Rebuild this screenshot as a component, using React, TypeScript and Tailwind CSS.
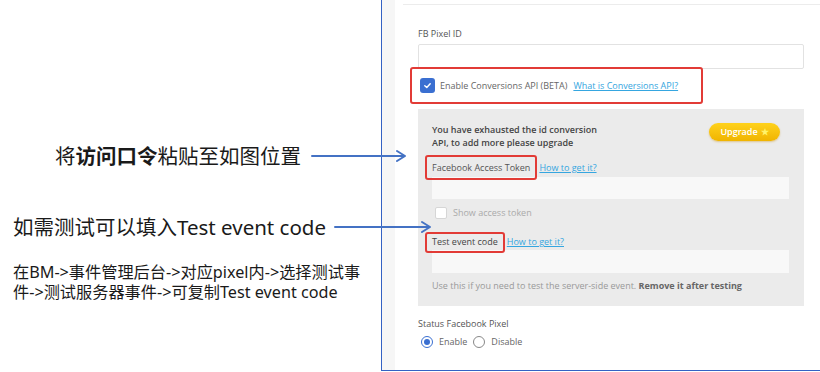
import React from "react";

const cjk = { fontFamily: '"Noto Sans", "Noto Sans CJK SC", sans-serif' };
const ui = { fontFamily: '"Open Sans", "Noto Sans", sans-serif' };

function Arrows() {
  return (
    <svg className="absolute left-0 top-0 pointer-events-none" width="820" height="372" viewBox="0 0 820 372" fill="none">
      <g stroke="#4472c4" strokeWidth="2" strokeLinecap="round" strokeLinejoin="round">
        <line x1="312" y1="156" x2="404" y2="156" />
        <path d="M397 151 L405 156 L397 161" />
        <line x1="335" y1="227" x2="429" y2="227" />
        <path d="M422 222 L430 227 L422 232" />
      </g>
    </svg>
  );
}

function Check({ on }: { on?: boolean }) {
  return on ? (
    <span className="flex h-[15px] w-[15px] items-center justify-center rounded-[3px] bg-[#3a6fd1]">
      <svg width="9" height="9" viewBox="0 0 10 10" fill="none" stroke="white" strokeWidth="1.6" strokeLinecap="round" strokeLinejoin="round">
        <path d="M2 5.2 L4.2 7.2 L8 3" />
      </svg>
    </span>
  ) : (
    <span className="h-[12px] w-[12px] rounded-[2px] border border-[#d6d6d6] bg-white" />
  );
}

export default function App() {
  return (
    <div className="relative flex h-[372px] w-[820px] overflow-hidden bg-white">
      {/* annotations */}
      <div className="w-[381px] shrink-0 text-[#1a1a1a]" style={cjk}>
        <div className="pl-[55px] pt-[142px] text-[20.5px] leading-[28px]">
          将<b className="font-bold">访问口令</b>粘贴至如图位置
        </div>
        <div className="pl-[13px] pt-[43px] text-[20.5px] leading-[28px]">如需测试可以填入Test event code</div>
        <div className="flex flex-col pl-[13px] pt-[21px] text-[16.2px] leading-[20px]">
          <div className="h-[20px] whitespace-nowrap">在BM-&gt;事件管理后台-&gt;对应pixel内-&gt;选择测试事</div>
          <div className="h-[20px] whitespace-nowrap">件-&gt;测试服务器事件-&gt;可复制Test event code</div>
        </div>
      </div>

      {/* screenshot panel */}
      <div className="flex h-[371px] flex-1 border-b border-l border-[#3462c4]">
        <div className="w-[13px] shrink-0 bg-[#f6f6f6]" />
        <div className="flex-1 text-[9px] text-[#555]" style={ui}>
          <div className="ml-2 h-[5px] border-b border-[#ececec]" />
          <div className="pl-[23px] pr-4">
            <div className="pt-[23px] leading-[12px]">FB Pixel ID</div>
            <div className="mt-[4px] h-[25px] rounded-[2px] border border-[#e2e2e2] bg-white" />
            <div className="-ml-2 mt-[-2px] flex h-[37px] w-[293px] items-center gap-[5px] rounded-[3px] border-2 border-[#e23b36] pl-[8px]">
              <Check on />
              <span className="text-[#666]">Enable Conversions API (BETA)</span>
              <span className="ml-[1px] text-[#35a6e0] underline">What is Conversions API?</span>
            </div>
            <div className="mt-[5px] h-[197px] bg-[#ebebeb] px-[14px] pt-[14px]">
              <div className="flex items-start justify-between pr-[10px]">
                <div className="font-semibold leading-[13px] text-[#444]">
                  You have exhausted the id conversion
                  <br />
                  API, to add more please upgrade
                </div>
                <div className="flex h-[18px] w-[71px] items-center justify-center gap-[3px] rounded-full bg-gradient-to-b from-[#ffd21a] to-[#f0b400] font-semibold text-white shadow-[0_1px_2px_rgba(200,140,0,0.4)]">
                  Upgrade <span className="text-[#fff36a]">★</span>
                </div>
              </div>
              <div className="mt-[6px] flex items-center">
                <span className="-ml-[7px] flex h-[25px] items-center rounded-[3px] border-2 border-[#e23b36] px-[5px] text-[#555]">
                  Facebook Access Token
                </span>
                <span className="ml-[2px] text-[#35a6e0] underline">How to get it?</span>
              </div>
              <div className="mr-[1px] mt-[-3px] h-[22px] bg-[#f8f8f8]" />
              <div className="mt-[7px] flex items-center gap-[6px] pl-[3px] text-[#aaa]">
                <Check />
                <span>Show access token</span>
              </div>
              <div className="mt-[12px] flex items-center">
                <span className="-ml-[7px] flex h-[21px] items-center rounded-[3px] border-2 border-[#e23b36] px-[5px] text-[#444]">
                  Test event code
                </span>
                <span className="ml-[2px] text-[#35a6e0] underline">How to get it?</span>
              </div>
              <div className="mr-[1px] mt-[-3px] h-[23px] bg-[#f8f8f8]" />
              <div className="mt-[6px] text-[#999]">
                Use this if you need to test the server-side event. <b className="font-bold text-[#666]">Remove it after testing</b>
              </div>
            </div>
            <div className="mt-[12px] leading-[12px] text-[#555]">Status Facebook Pixel</div>
            <div className="mt-[5px] flex items-center gap-[6px] pl-[3px] text-[#666]">
              <span className="flex h-[12px] w-[12px] items-center justify-center rounded-full border border-[#3a6fd1] bg-white">
                <span className="h-[6px] w-[6px] rounded-full bg-[#3a6fd1]" />
              </span>
              <span>Enable</span>
              <span className="h-[12px] w-[12px] rounded-full border border-[#888] bg-white" />
              <span>Disable</span>
            </div>
          </div>
        </div>
      </div>

      <Arrows />
    </div>
  );
}
